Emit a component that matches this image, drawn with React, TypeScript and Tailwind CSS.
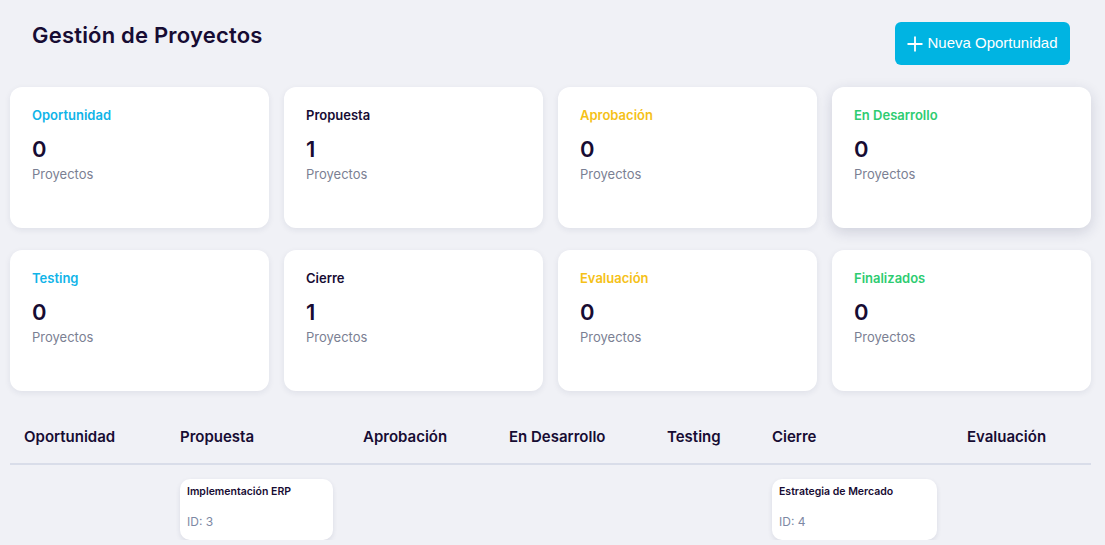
import React from 'react';

const stages = [
  { name: 'Oportunidad', count: 0, color: 'text-[#10b4e8]' },
  { name: 'Propuesta', count: 1, color: 'text-[#170c33]' },
  { name: 'Aprobación', count: 0, color: 'text-[#f5c118]' },
  { name: 'En Desarrollo', count: 0, color: 'text-[#2ecc71]', hovered: true },
  { name: 'Testing', count: 0, color: 'text-[#10b4e8]' },
  { name: 'Cierre', count: 1, color: 'text-[#170c33]' },
  { name: 'Evaluación', count: 0, color: 'text-[#f5c118]' },
  { name: 'Finalizados', count: 0, color: 'text-[#2ecc71]' },
];

// Kanban columns (widths follow the board layout)
const columns = [
  { name: 'Oportunidad', width: 'w-[156px]', items: [] as { title: string; id: number; w: string }[] },
  { name: 'Propuesta', width: 'w-[183px]', items: [{ title: 'Implementación ERP', id: 3, w: 'w-[153px]' }] },
  { name: 'Aprobación', width: 'w-[146px]', items: [] },
  { name: 'En Desarrollo', width: 'w-[158px]', items: [] },
  { name: 'Testing', width: 'w-[105px]', items: [] },
  { name: 'Cierre', width: 'w-[195px]', items: [{ title: 'Estrategia de Mercado', id: 4, w: 'w-[165px]' }] },
  { name: 'Evaluación', width: 'w-[138px]', items: [] },
];

function StatCard({ stage }: { stage: (typeof stages)[number] }) {
  return (
    <div
      className={`h-[141px] rounded-[12px] bg-white px-[22px] pt-[18px] ${
        stage.hovered ? 'shadow-[0_4px_14px_rgba(30,40,80,0.16)]' : 'shadow-[0_2px_6px_rgba(30,40,80,0.08)]'
      }`}
    >
      <div className={`text-[13px] leading-[20px] font-semibold ${stage.color}`}>{stage.name}</div>
      <div className="mt-[9px] text-[22px] leading-[30px] font-semibold text-[#170c33]">{stage.count}</div>
      <div className="text-[13px] leading-[20px] text-[#7b7f93]">Proyectos</div>
    </div>
  );
}

export default function App() {
  return (
    <div className="h-[545px] overflow-hidden bg-[#f0f1f6] pl-[10px] pr-[14px] font-['Inter',sans-serif]">
      {/* Header */}
      <div className="flex items-start justify-between pt-[22px]">
        <h1 className="pl-[22px] text-[22px] leading-[26px] font-semibold tracking-[0.2px] text-[#170c33]">
          Gestión de Proyectos
        </h1>
        <button className="mr-[21px] flex h-[43px] w-[175px] items-center justify-center gap-[4px] rounded-[6px] bg-[#00b4e2] font-['Liberation_Sans',Arial,sans-serif] text-[15px] text-white">
          <svg width="16" height="16" viewBox="0 0 16 16" className="shrink-0">
            <path d="M8 0.5v15M0.5 8h15" stroke="white" strokeWidth="1.8" />
          </svg>
          Nueva Oportunidad
        </button>
      </div>

      {/* Stage summary */}
      <div className="mt-[22px] grid grid-cols-4 gap-x-[15px] gap-y-[22px]">
        {stages.map((s) => (
          <StatCard key={s.name} stage={s} />
        ))}
      </div>

      {/* Board */}
      <div className="mt-[22px] overflow-hidden">
        <div className="flex">
          {columns.map((col) => (
            <div key={col.name} className={`${col.width} shrink-0`}>
              <div className="border-b-2 border-[#d9dde9] pl-[14px] pt-[12px] pb-[14px] text-[15px] leading-[24px] font-semibold text-[#170c33]">
                {col.name}
              </div>
              <div className="flex flex-col gap-3 pl-[14px] pt-[14px]">
                {col.items.map((it) => (
                  <div
                    key={it.id}
                    className={`${it.w} rounded-[10px] bg-white px-[7px] pt-[5px] pb-[10px] shadow-[0_2px_5px_rgba(30,40,80,0.1)]`}
                  >
                    <div className="text-[10.5px] leading-[16px] font-semibold text-[#170c33]">{it.title}</div>
                    <div className="mt-[14px] text-[12px] leading-[16px] text-[#7d88a4]">ID: {it.id}</div>
                  </div>
                ))}
              </div>
            </div>
          ))}
        </div>
      </div>
    </div>
  );
}
